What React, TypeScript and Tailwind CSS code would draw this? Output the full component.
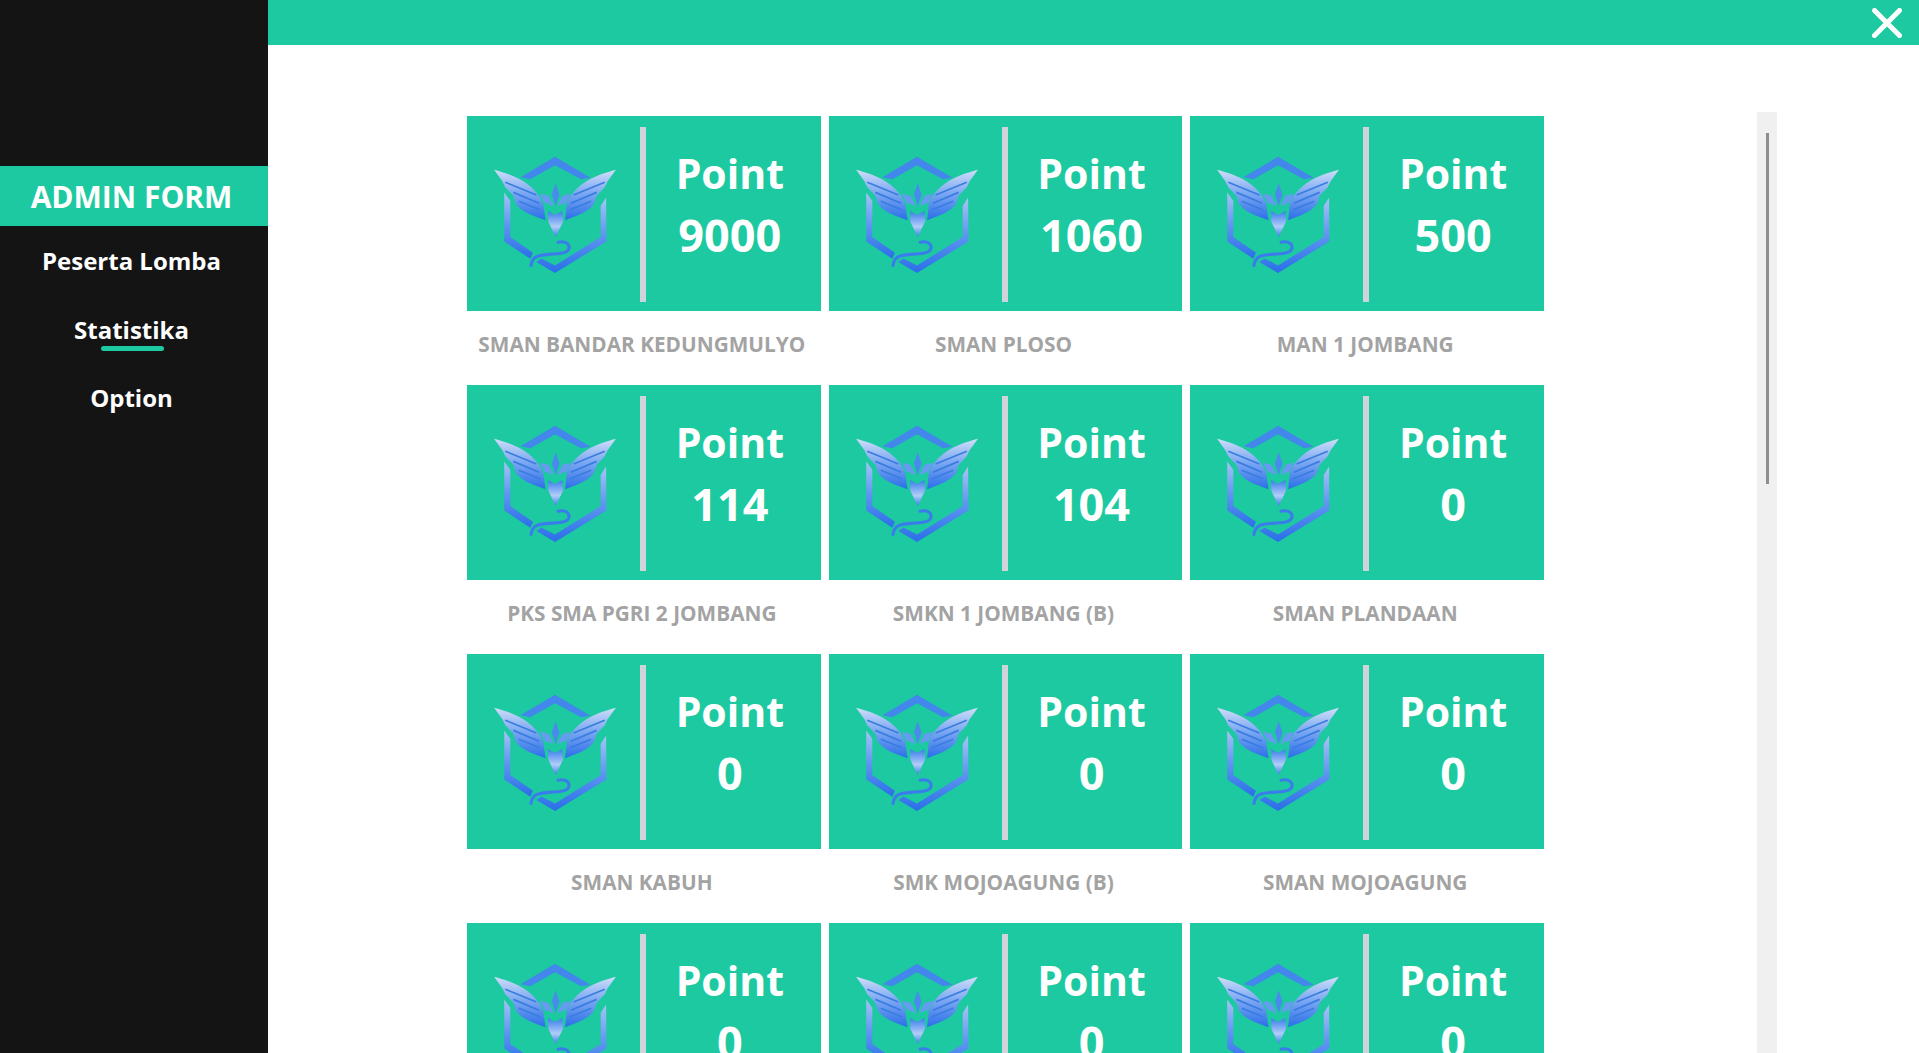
const schools = [
  { name: 'SMAN BANDAR KEDUNGMULYO', point: 9000 },
  { name: 'SMAN PLOSO', point: 1060 },
  { name: 'MAN 1 JOMBANG', point: 500 },
  { name: 'PKS SMA PGRI 2 JOMBANG', point: 114 },
  { name: 'SMKN 1 JOMBANG (B)', point: 104 },
  { name: 'SMAN PLANDAAN', point: 0 },
  { name: 'SMAN KABUH', point: 0 },
  { name: 'SMK MOJOAGUNG (B)', point: 0 },
  { name: 'SMAN MOJOAGUNG', point: 0 },
  { name: 'SMAN BARENG', point: 0 },
  { name: 'SMAN NGORO', point: 0 },
  { name: 'SMAN GUDO', point: 0 },
];

const menu = ['Peserta Lomba', 'Statistika', 'Option'];

function Logo() {
  return (
    <svg viewBox="0 0 390 390" className="w-[132px] h-[132px] shrink-0 mb-[8px] ml-[3px]">
      <defs>
        <linearGradient id="hexGrad" x1="0" y1="0" x2="0" y2="1">
          <stop offset="0" stopColor="#a8c4f6" />
          <stop offset="0.5" stopColor="#5e95f0" />
          <stop offset="1" stopColor="#2a6ee8" />
        </linearGradient>
        <linearGradient id="wingGrad" x1="0" y1="0" x2="0" y2="1">
          <stop offset="0" stopColor="#d0def9" />
          <stop offset="0.45" stopColor="#7eaaf2" />
          <stop offset="1" stopColor="#2a6ee8" />
        </linearGradient>
        <linearGradient id="bodyGrad" x1="0" y1="0" x2="0" y2="1">
          <stop offset="0" stopColor="#3a7cec" />
          <stop offset="0.6" stopColor="#b0cdf8" />
          <stop offset="1" stopColor="#3a7cec" />
        </linearGradient>
      </defs>
      <polygon points="93,95 195,35 300,97 272,101 195,60 122,101" fill="#4386ec" />
      <polygon points="45,140 63,165 63,272 130,318 122,336 45,285" fill="url(#hexGrad)" />
      <polygon points="346,155 347,285 195,378 140,346 155,335 195,356 330,272 330,180" fill="url(#hexGrad)" />
      <path d="M124 356 C128 325 150 325 190 322 C225 320 240 315 236 298 C232 287 218 284 204 287" fill="none" stroke="#3a7cec" strokeWidth="9" strokeLinecap="round" />
      <path d="M15 73 C60 85 130 105 160 172 L167 222 C130 210 90 195 78 170 L72 150 L48 125 L40 108 Z" fill="url(#wingGrad)" />
      <path d="M375 73 C330 85 260 105 230 172 L225 222 C260 210 300 195 312 170 L318 150 L342 125 L350 108 Z" fill="url(#wingGrad)" />
      <path d="M48 110 L140 148 M72 140 L148 172 M88 166 L152 192" stroke="#3a7ce0" strokeWidth="5" fill="none" />
      <path d="M342 110 L250 148 M318 140 L242 172 M302 166 L238 192" stroke="#3a7ce0" strokeWidth="5" fill="none" />
      <polygon points="175,195 195,207 217,195 219,226 197,272 175,226" fill="url(#bodyGrad)" />
      <polygon points="197,113 208,146 197,180 186,146" fill="#4a8aee" />
      <polygon points="150,144 176,150 191,180 164,170" fill="#669cf0" />
      <polygon points="243,144 217,150 202,180 229,170" fill="#669cf0" />
    </svg>
  );
}

function Card({ name, point }: { name: string; point: number }) {
  return (
    <div className="flex flex-col items-center">
      <div className="flex w-full h-[195px] bg-[#1dc9a0] pt-[11px] pb-[9px]">
        <div className="w-[173px] flex items-center justify-center">
          <Logo />
        </div>
        <div className="w-[6px] bg-[#ced4da]" />
        <div className="flex-1 pr-[7px] text-center text-white font-bold text-[41px] leading-[61px]">
          <div className="pt-[16px]">Point</div>
          <div className="text-[45px]">{point}</div>
        </div>
      </div>
      <div className="h-[74px] pt-[19px] pr-1 text-[20.8px] leading-[28px] font-bold text-[#a3a3a3]">{name}</div>
    </div>
  );
}

export default function App() {
  return (
    <div className="flex h-screen overflow-hidden bg-white font-['Open_Sans','Noto_Sans',sans-serif]">
      <aside className="w-[268px] shrink-0 bg-[#141414] pt-[166px] pr-[5px] text-center text-white font-bold">
        <div className="h-[60px] leading-[62px] bg-[#1dc9a0] -mr-[5px] pr-[5px] text-[30px]">ADMIN FORM</div>
        <ul className="text-[24px]">
          {menu.map((item) => (
            <li key={item} className="h-[68.5px] pt-[17px] leading-[36px]">
              <span className="relative inline-block">
                {item}
                {item === 'Statistika' && (
                  <span className="absolute left-[27px] right-[25px] top-[34px] h-[5px] rounded-full bg-[#1dc9a0]" />
                )}
              </span>
            </li>
          ))}
        </ul>
      </aside>
      <main className="flex-1 min-w-0">
        <header className="h-[45px] bg-[#1dc9a0] flex items-center justify-end pr-[17px]">
          <svg viewBox="0 0 30 30" className="w-[30px] h-[30px] mt-[1px]" fill="none" stroke="white" strokeWidth="5" strokeLinecap="round">
            <path d="M2.5 2.5 L27.5 27.5 M27.5 2.5 L2.5 27.5" />
          </svg>
        </header>
        <div className="flex pl-[199px] pt-[67px]">
          <div className="w-[1077px] shrink-0 pt-1 grid grid-cols-3 gap-x-2 content-start">
            {schools.map((school) => (
              <Card key={school.name} name={school.name} point={school.point} />
            ))}
          </div>
          <div className="ml-[213px] w-5 h-[1000px] bg-[#f0f0f0] pt-[21px] shrink-0">
            <div className="mx-auto w-[3px] h-[351px] bg-[#8e8e8e]" />
          </div>
        </div>
      </main>
    </div>
  );
}
